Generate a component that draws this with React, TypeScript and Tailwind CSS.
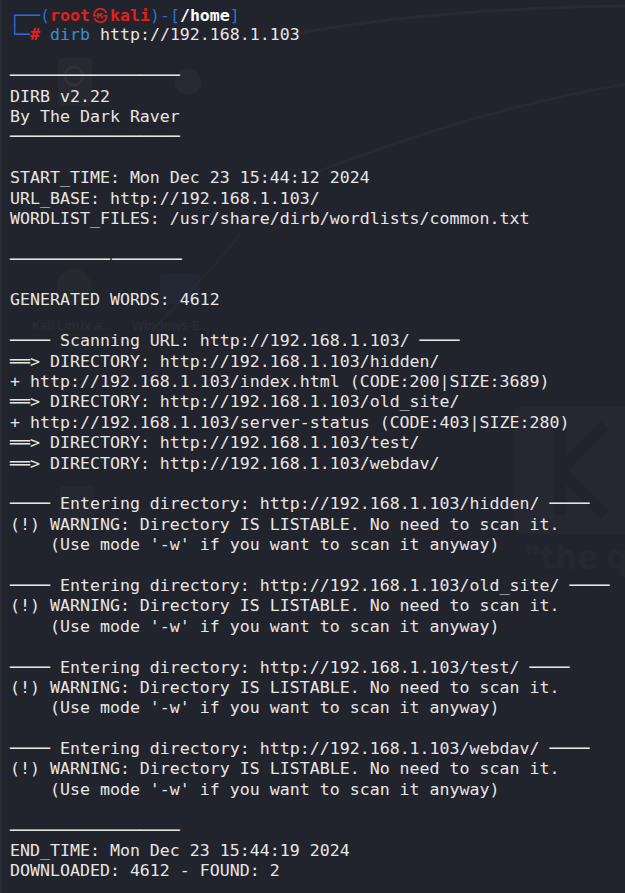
import React from 'react'

const BLUE = 'text-[#2f6bd6]'
const DASH = '────'
const SEP = '─────────────────'

function Line({ children }: { children?: React.ReactNode }) {
  return <div className="h-[20.4px] leading-[20.4px] whitespace-pre">{children ?? ' '}</div>
}

function Arrow() {
  return <span>══&gt;</span>
}

function Wallpaper() {
  return (
    <div className="absolute inset-0 pointer-events-none">
      <svg width="625" height="893" className="absolute inset-0">
        <path d="M290 34 Q 440 8 625 6" stroke="#ffffff" strokeOpacity="0.03" strokeWidth="3" fill="none" />
        <path d="M300 178 Q 470 110 625 84" stroke="#ffffff" strokeOpacity="0.025" strokeWidth="3" fill="none" />
        <path d="M150 330 Q 230 250 240 230" stroke="#ffffff" strokeOpacity="0.02" strokeWidth="2" fill="none" />
        {/* desktop icons */}
        <rect x="56" y="58" width="34" height="48" rx="3" fill="#ffffff" fillOpacity="0.025" />
        <circle cx="72" cy="76" r="9" stroke="#ffffff" strokeOpacity="0.045" strokeWidth="3" fill="none" />
        <circle cx="186" cy="82" r="13" fill="#ffffff" fillOpacity="0.03" />
        <circle cx="72" cy="286" r="17" fill="#ffffff" fillOpacity="0.025" />
        <rect x="158" y="274" width="40" height="30" rx="4" fill="#3a5a8a" fillOpacity="0.08" />
        <rect x="58" y="486" width="34" height="40" rx="3" fill="#ffffff" fillOpacity="0.02" />
        {/* kali logo */}
        <rect x="512" y="406" width="130" height="128" rx="8" fill="#ffffff" fillOpacity="0.018" />
        <path d="M558 425 L558 515 M558 470 L603 425 M558 470 L603 515" stroke="#20222b" strokeOpacity="0.6" strokeWidth="12" fill="none" />
      </svg>
      <div className="absolute left-[30px] top-[316px] text-[13px] text-[#2a2d36] font-['Noto_Sans',sans-serif]">Kali Linux a…</div>
      <div className="absolute left-[130px] top-[316px] text-[13px] text-[#2a2d36] font-['Noto_Sans',sans-serif]">Windows-E…</div>
      <div className="absolute left-[522px] top-[539px] text-[34px] font-bold leading-none text-[#262831] font-['Noto_Sans',sans-serif] whitespace-nowrap">"the q</div>
    </div>
  )
}

export default function App() {
  return (
    <div className="relative w-[625px] h-[893px] overflow-hidden bg-[#22242d] border-l-2 border-[#2a2c35]">
      <Wallpaper />
      <div className="relative pt-[5px] pl-[8px] text-[16.6px] text-[#e6e6e6] font-['DejaVu_Sans_Mono',monospace]">
        <Line>
          <span className={BLUE}>┌──(</span>
          <span className="text-[#e3201b] font-bold">root</span>
          <span className="inline-block w-[20px] text-center text-[#e3201b] font-['Noto_Sans_CJK_KR',sans-serif] text-[15px]">㉿</span>
          <span className="text-[#e3201b] font-bold">kali</span>
          <span className={BLUE}>)-[</span>
          <span className="font-bold text-white">/home</span>
          <span className={BLUE}>]</span>
        </Line>
        <Line>
          <span className={BLUE}>└─</span>
          <span className="text-[#e3201b] font-bold">#</span>
          {' '}
          <span className="text-[#3c8fd4]">dirb</span>
          {' http://192.168.1.103'}
        </Line>
        <Line />
        <Line>{SEP}</Line>
        <Line>DIRB v2.22</Line>
        <Line>By The Dark Raver</Line>
        <Line>{SEP}</Line>
        <Line />
        <Line>START_TIME: Mon Dec 23 15:44:12 2024</Line>
        <Line>URL_BASE: http://192.168.1.103/</Line>
        <Line>WORDLIST_FILES: /usr/share/dirb/wordlists/common.txt</Line>
        <Line />
        <Line>
          <span>──────────</span>
          <span className="ml-[2px]">───────</span>
        </Line>
        <Line />
        <Line>GENERATED WORDS: 4612</Line>
        <Line />
        <Line>{DASH} Scanning URL: http://192.168.1.103/ {DASH}</Line>
        <Line><Arrow /> DIRECTORY: http://192.168.1.103/hidden/</Line>
        <Line>+ http://192.168.1.103/index.html (CODE:200|SIZE:3689)</Line>
        <Line><Arrow /> DIRECTORY: http://192.168.1.103/old_site/</Line>
        <Line>+ http://192.168.1.103/server-status (CODE:403|SIZE:280)</Line>
        <Line><Arrow /> DIRECTORY: http://192.168.1.103/test/</Line>
        <Line><Arrow /> DIRECTORY: http://192.168.1.103/webdav/</Line>
        {['hidden', 'old_site', 'test', 'webdav'].map((dir) => (
          <React.Fragment key={dir}>
            <Line />
            <Line>{DASH} Entering directory: http://192.168.1.103/{dir}/ {DASH}</Line>
            <Line>(!) WARNING: Directory IS LISTABLE. No need to scan it.</Line>
            <Line>    (Use mode '-w' if you want to scan it anyway)</Line>
          </React.Fragment>
        ))}
        <Line />
        <Line>{SEP}</Line>
        <Line>END_TIME: Mon Dec 23 15:44:19 2024</Line>
        <Line>DOWNLOADED: 4612 - FOUND: 2</Line>
      </div>
    </div>
  )
}
